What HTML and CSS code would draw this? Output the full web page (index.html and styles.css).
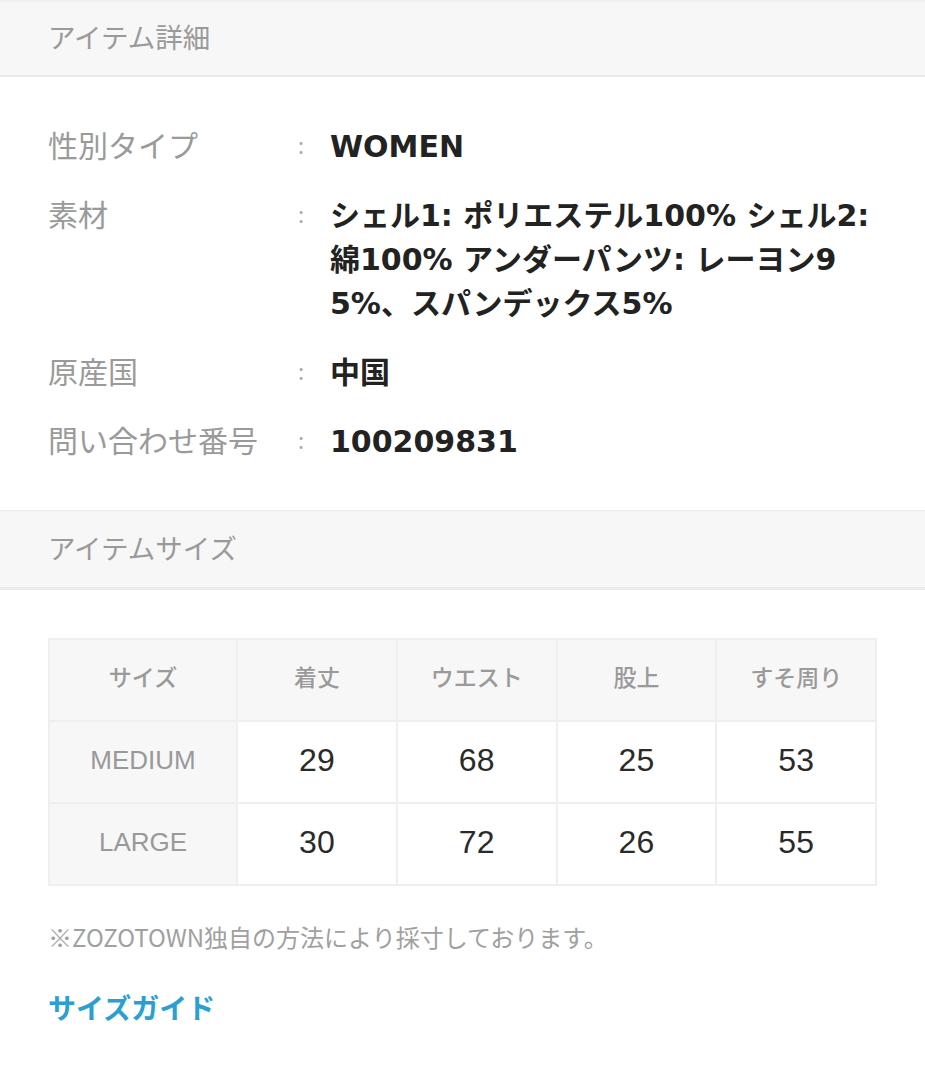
FILE: index.html
```html
<!DOCTYPE html>
<html lang="ja">
<head>
<meta charset="utf-8">
<link rel="stylesheet" href="styles.css">
</head>
<body>
<section class="section">
  <h2 class="section-head head-first">アイテム詳細</h2>
  <dl class="details">
    <div class="row"><dt>性別タイプ</dt><dd>WOMEN</dd></div>
    <div class="row"><dt>素材</dt><dd>シェル1: ポリエステル100% シェル2: 綿100% アンダーパンツ: レーヨン95%、スパンデックス5%</dd></div>
    <div class="row"><dt>原産国</dt><dd>中国</dd></div>
    <div class="row"><dt>問い合わせ番号</dt><dd>100209831</dd></div>
  </dl>
</section>
<section class="section">
  <h2 class="section-head">アイテムサイズ</h2>
  <div class="size-body">
    <table class="size-table">
      <thead>
        <tr><th>サイズ</th><th>着丈</th><th>ウエスト</th><th>股上</th><th>すそ周り</th></tr>
      </thead>
      <tbody>
        <tr><th>MEDIUM</th><td>29</td><td>68</td><td>25</td><td>53</td></tr>
        <tr><th>LARGE</th><td>30</td><td>72</td><td>26</td><td>55</td></tr>
      </tbody>
    </table>
    <p class="note">※ZOZOTOWN独自の方法により採寸しております。</p>
    <a class="guide" href="#">サイズガイド</a>
  </div>
</section>
</body>
</html>
```

FILE: styles.css
```css
html, body {
  margin: 0;
  padding: 0;
  background: #fff;
}
body {
  width: 925px;
  font-family: "Noto Sans CJK JP", "Liberation Sans", sans-serif;
  color: #222;
}
.section-head {
  margin: 0;
  height: 80px;
  box-sizing: border-box;
  padding-left: 48px;
  padding-bottom: 4px;
  display: flex;
  align-items: center;
  background: #f7f7f7;
  border-top: 1px solid #ececec;
  border-bottom: 3px solid #ebebeb;
  font-size: 27.5px;
  font-weight: 400;
  color: #9a9a9a;
}
.head-first {
  height: 77px;
  padding-bottom: 5px;
  border-top: 2px solid #f0f0f0;
  border-bottom: 2px solid #ebebeb;
}
.details {
  margin: 0;
  padding: 45px 48px 46px 48px;
  display: flex;
  flex-direction: column;
  gap: 22px;
}
.row {
  display: flex;
  align-items: flex-start;
  font-size: 30px;
  line-height: 44px;
}
.row dt {
  width: 250px;
  flex: none;
  color: #9a9a9a;
  position: relative;
  white-space: nowrap;
}
.row dt::after {
  content: ":";
  position: absolute;
  left: 250px;
  top: 0;
  font-size: 22px;
  color: #aaa;
}
.row dd {
  margin: 0 0 0 32px;
  padding-top: 3px;
  font-family: "DejaVu Sans", "Noto Sans CJK JP", sans-serif;
  font-weight: 700;
  color: #222;
  width: 546px;
  word-break: break-all;
}
.size-body {
  padding: 48px 48px 40px 48px;
}
.size-table {
  width: 829px;
  border-collapse: collapse;
  table-layout: fixed;
  font-family: "Liberation Sans", "Noto Sans CJK JP", sans-serif;
}
.size-table th,
.size-table td {
  border: 2px solid #efefef;
  height: 76px;
  padding: 0 0 4px 0;
  text-align: center;
  vertical-align: middle;
}
.size-table th:first-child {
  width: 186px;
}
.size-table thead th {
  background: #f7f7f7;
  height: 72px;
  padding-bottom: 8px;
  font-family: "Noto Sans CJK JP", sans-serif;
  font-size: 23px;
  font-weight: 500;
  color: #9a9a9a;
}
.size-table tbody th {
  background: #f7f7f7;
  font-size: 26px;
  font-weight: 400;
  color: #999;
}
.size-table td {
  background: #fff;
  font-size: 32px;
  color: #2a2a2a;
}
.note {
  margin: 35px 0 0 0;
  font-size: 24px;
  line-height: 32px;
  font-weight: 400;
  color: #a0a0a0;
}
.guide {
  display: inline-block;
  margin-top: 34px;
  font-size: 28px;
  line-height: 40px;
  font-weight: 700;
  color: #2a9fd2;
  text-decoration: none;
}
```
